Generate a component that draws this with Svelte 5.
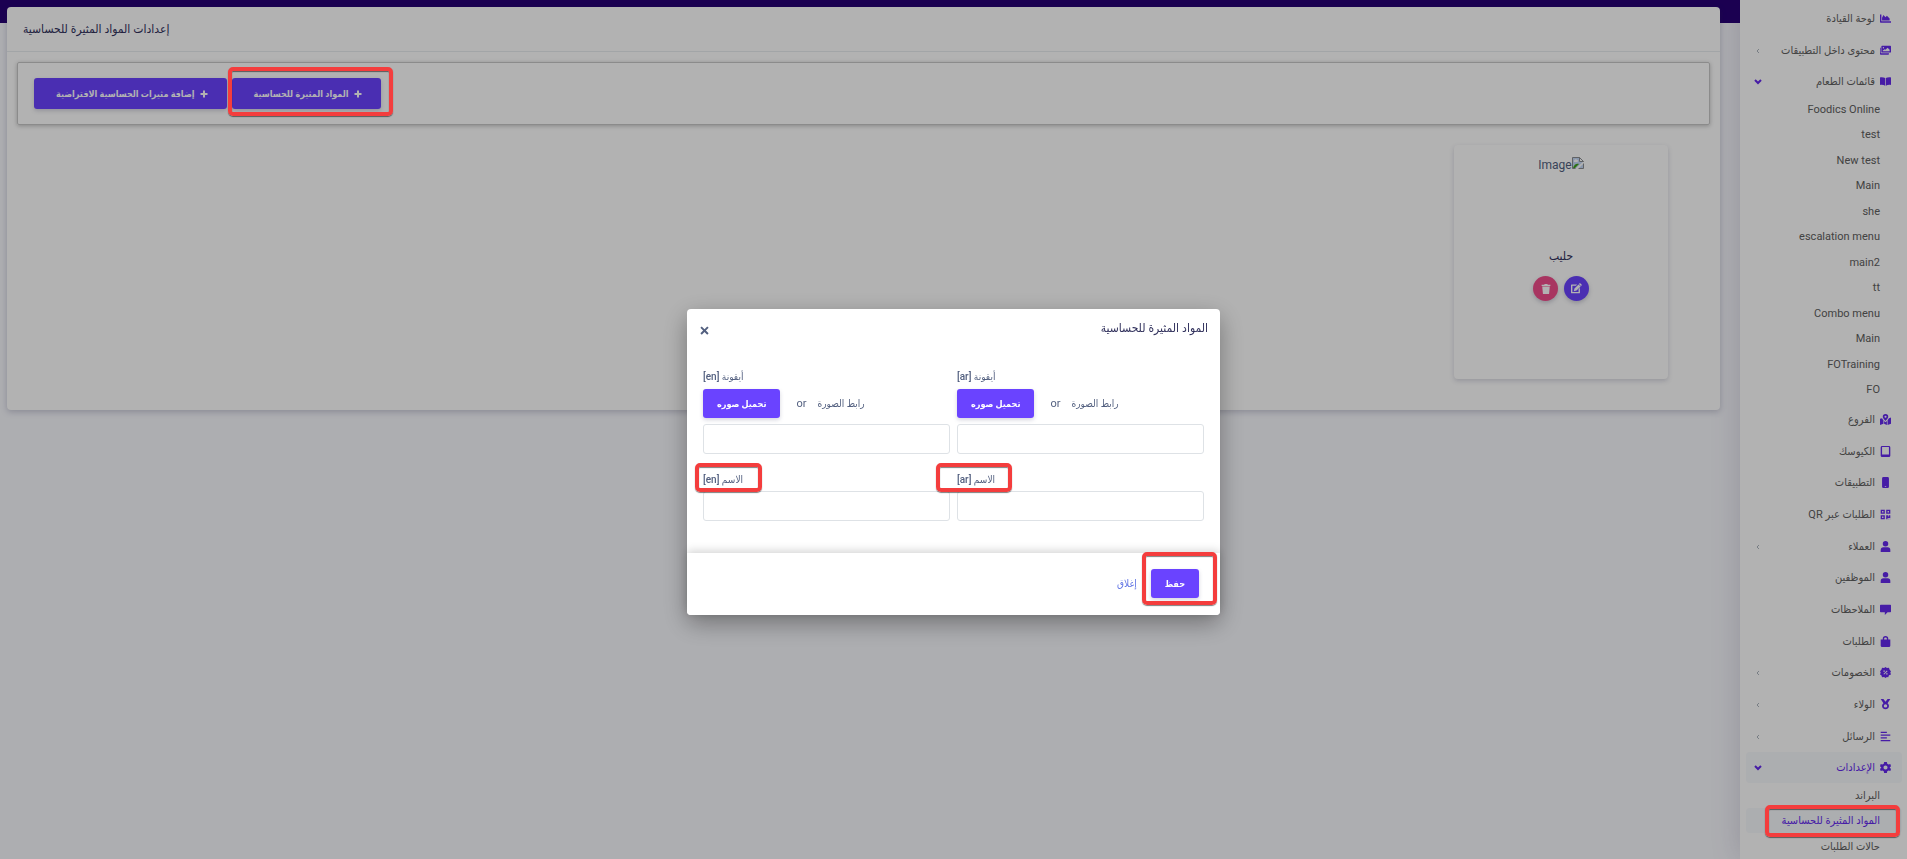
<script lang="ts">
    interface Entry {
        label: string;
        icon: string;
        more?: boolean;
        open?: boolean;
        active?: boolean;
        children?: { label: string; active?: boolean }[];
    }

    const icons: Record<string, string> = {
        chart: "M0 2h2v10h14v2H1a1 1 0 0 1-1-1zM3 11V7l2-4 3 3 2-2 4 4v3z",
        images: "M3 1h12a1 1 0 0 1 1 1v8a1 1 0 0 1-1 1H3a1 1 0 0 1-1-1V2a1 1 0 0 1 1-1zm1 8h10V7l-3-3-3 3-1-1-3 2zM5 3a1 1 0 1 0 0 2 1 1 0 0 0 0-2zM0 4h1v7a1 1 0 0 0 1 1h11v1a1 1 0 0 1-1 1H1a1 1 0 0 1-1-1z",
        book: "M0 2c3-.5 5.500 0 7.500 1v11C5.500 13 3 12.500 0 13zM16 2c-3-.5-5.500 0-7.500 1v11c2-1 4.500-1.500 7.500-1z",
        map: "M8 0a4 4 0 0 1 4 4c0 2-2.500 4.500-4 6-1.500-1.500-4-4-4-6a4 4 0 0 1 4-4zm0 2.500a1.500 1.500 0 1 0 0 3 1.500 1.500 0 0 0 0-3zM0 7l3-1c.5 1 1 2 2 3v5l-5 2zM6 10l2 2 2-2v6l-4-2zM13 6l3-1v9l-5 2V9z",
        tablet: "M3 0h10a2 2 0 0 1 2 2v12a2 2 0 0 1-2 2H3a2 2 0 0 1-2-2V2a2 2 0 0 1 2-2zm0 1.500v11h10v-11z",
        phone: "M5 0h6a2 2 0 0 1 2 2v12a2 2 0 0 1-2 2H5a2 2 0 0 1-2-2V2a2 2 0 0 1 2-2zm2 13v1h2v-1z",
        qr: "M1 1h6v6H1zm2 2v2h2V3zM9 1h6v6H9zm2 2v2h2V3zM1 9h6v6H1zm2 2v2h2v-2zM9 9h3v2h1V9h2v4h-4v2H9zM12 14h1v1h-1zM14 14h1v1h-1z",
        user: "M8 0a4 4 0 1 1 0 8 4 4 0 0 1 0-8zM5 9h6a4 4 0 0 1 4 4v3H1v-3a4 4 0 0 1 4-4z",
        comment: "M1 1h14a1 1 0 0 1 1 1v9a1 1 0 0 1-1 1h-4l-4 4v-4H1a1 1 0 0 1-1-1V2a1 1 0 0 1 1-1z",
        bag: "M4 5V4a4 4 0 0 1 8 0v1h3v9a2 2 0 0 1-2 2H3a2 2 0 0 1-2-2V5zm2 0h4V4a2 2 0 0 0-4 0z",
        badge: "M8 0l2 1.500 3-.5 1 3 2 2-1 2 1 3-3 1-1 3-2-.5L8 16l-2-1.500-3 .5-1-3-2-1 1-3-1-2 2-2 1-3 3 .5zM5 5v2h2V5zM9 9v2h2V9zM10 5l-5 5 1 1 5-5z",
        medal: "M1 0h4l3 4 3-4h4l-4 6a5 5 0 1 1-6 0zm7 7.500a2.500 2.500 0 1 0 0 5 2.500 2.500 0 0 0 0-5z",
        lines: "M1 1h9v2H1zM1 5h14v2H1zM1 9h9v2H1zM1 13h14v2H1z",
        cog: "M6 0h4l.5 2.500L12.500 3.500 15 3l1 3-2 2 2 2-1 3-2.500-.5-2 1L10 16H6l-.5-2.500-2-1L1 13l-1-3 2-2-2-2 1-3 2.500.5 2-1zM8 5a3 3 0 1 0 0 6 3 3 0 0 0 0-6z",
        trash: "M1 1h4l1-1h4l1 1h4v2H1zM2 4h12l-1 11a1 1 0 0 1-1 1H4a1 1 0 0 1-1-1z",
        edit: "M2 2h7L7 4H2v9h9V9l2-2v7a1 1 0 0 1-1 1H1a1 1 0 0 1-1-1V3a1 1 0 0 1 1-1zM13 0l3 3-1.500 1.500-3-3zM11 2l3 3-6 6-4 1 1-4z",
        plus: "M6 1h4v5h5v4h-5v5H6v-5H1V6h5z",
        close: "M2 4l2-2 4 4 4-4 2 2-4 4 4 4-2 2-4-4-4 4-2-2 4-4z",
    };

    const menu: Entry[] = [
        { label: "لوحة القيادة", icon: "chart" },
        { label: "محتوى داخل التطبيقات", icon: "images", more: true },
        {
            label: "قائمات الطعام",
            icon: "book",
            more: true,
            open: true,
            children: [
                { label: "Foodics Online" },
                { label: "test" },
                { label: "New test" },
                { label: "Main" },
                { label: "she" },
                { label: "escalation menu" },
                { label: "main2" },
                { label: "tt" },
                { label: "Combo menu" },
                { label: "Main" },
                { label: "FOTraining" },
                { label: "FO" },
            ],
        },
        { label: "الفروع", icon: "map" },
        { label: "الكيوسك", icon: "tablet" },
        { label: "التطبيقات", icon: "phone" },
        { label: "الطلبات عبر QR", icon: "qr" },
        { label: "العملاء", icon: "user", more: true },
        { label: "الموظفين", icon: "user" },
        { label: "الملاحظات", icon: "comment" },
        { label: "الطلبات", icon: "bag" },
        { label: "الخصومات", icon: "badge", more: true },
        { label: "الولاء", icon: "medal", more: true },
        { label: "الرسائل", icon: "lines", more: true },
        {
            label: "الإعدادات",
            icon: "cog",
            more: true,
            open: true,
            active: true,
            children: [
                { label: "البراند" },
                { label: "المواد المثيرة للحساسية", active: true },
                { label: "حالات الطلبات" },
            ],
        },
    ];

    const langs = ["en", "ar"];
    let urls: Record<string, string> = $state({ en: "", ar: "" });
    let names: Record<string, string> = $state({ en: "", ar: "" });
    let showModal = $state(true);
</script>

{#snippet icon(name: string)}
    <svg class="icon" viewBox="0 0 16 16" aria-hidden="true">
        <path d={icons[name]} fill="currentColor" fill-rule="evenodd" />
    </svg>
{/snippet}

<div class="page" dir="rtl">
    <nav class="sidebar">
        <ul class="menu">
            {#each menu as entry}
                <li>
                    <a href="#top" class="entry" class:active={entry.active}>
                        {@render icon(entry.icon)}
                        <span>{entry.label}</span>
                        {#if entry.more}
                            <svg class="chevron" class:open={entry.open} viewBox="0 0 8 8" aria-hidden="true">
                                <path d={entry.open ? "M1 2l3 3 3-3" : "M5 2L3 4l2 2"} />
                            </svg>
                        {/if}
                    </a>
                    {#if entry.children}
                        <ul class="submenu">
                            {#each entry.children as child}
                                <li>
                                    <a href="#top" class:active={child.active}>{child.label}</a>
                                    {#if child.active}<span class="mark mark-menu"></span>{/if}
                                </li>
                            {/each}
                        </ul>
                    {/if}
                </li>
            {/each}
        </ul>
    </nav>

    <main>
        <section class="card">
            <header><h1>إعدادات المواد المثيرة للحساسية</h1></header>
            <div class="toolbar">
                <div class="marked">
                    <button class="btn large" onclick={() => (showModal = true)}>
                        {@render icon("plus")}المواد المثيرة للحساسية
                    </button>
                    <span class="mark mark-add"></span>
                </div>
                <button class="btn large">{@render icon("plus")}إضافة مثيرات الحساسية الافتراضية</button>
            </div>
            <div class="items">
                <article>
                    <div class="picture">
                        <svg viewBox="0 0 12 12" aria-hidden="true">
                            <path d="M0.500 0.500h7l4 4v7h-11z" fill="#c5d8f6" stroke="#8a8d91" />
                            <path d="M2 4c0-2 3-2 3-1 2 0 1 2 0 2H2z" fill="#fff" />
                            <path d="M1 11c1-4 4-5 6-4L3 11z" fill="#3ea21b" />
                            <path d="M3 12l9-8v2l-6 6z" fill="#fff" />
                            <path d="M7.500 0.500v4h4z" fill="#fff" stroke="#8a8d91" />
                        </svg>
                        <span>Image</span>
                    </div>
                    <h2>حليب</h2>
                    <div class="actions">
                        <button class="round" aria-label="تعديل">{@render icon("edit")}</button>
                        <button class="round danger" aria-label="حذف">{@render icon("trash")}</button>
                    </div>
                </article>
            </div>
        </section>
    </main>
</div>

{#if showModal}
    <div class="backdrop" dir="rtl">
        <div class="modal" role="dialog" aria-modal="true" aria-labelledby="modal-title">
            <header>
                <h2 id="modal-title">المواد المثيرة للحساسية</h2>
                <button class="close" aria-label="إغلاق" onclick={() => (showModal = false)}>
                    {@render icon("close")}
                </button>
            </header>
            <div class="fields" dir="ltr">
                {#each langs as lang}
                    <div class="field">
                        <label for="icon-{lang}" dir="rtl">أيقونة [{lang}]</label>
                        <div class="upload">
                            <button class="btn">تحميل صوره</button>
                            <span class="or">or</span>
                            <span>رابط الصورة</span>
                        </div>
                        <input id="icon-{lang}" type="text" bind:value={urls[lang]} />
                    </div>
                {/each}
                {#each langs as lang}
                    <div class="field">
                        <label for="name-{lang}" dir="rtl">الاسم [{lang}]</label>
                        <input id="name-{lang}" type="text" bind:value={names[lang]} />
                        <span class="mark mark-{lang}"></span>
                    </div>
                {/each}
            </div>
            <footer>
                <div class="marked">
                    <button class="btn">حفظ</button>
                    <span class="mark mark-save"></span>
                </div>
                <button class="link" onclick={() => (showModal = false)}>إغلاق</button>
            </footer>
        </div>
    </div>
{/if}

<style>
    :global(body) {
        background: #f8f9fe;
        overflow: hidden;
    }
    .page,
    .backdrop {
        font-family: Roboto, "DejaVu Sans Condensed", "DejaVu Sans", sans-serif;
        font-size: 11px;
        color: #525f7f;
    }
    .page {
        display: flex;
        height: 100vh;
    }
    h1,
    h2,
    ul {
        margin: 0;
        padding: 0;
        list-style: none;
    }
    button,
    input {
        font: inherit;
    }
    a {
        color: inherit;
        text-decoration: none;
    }
    .icon {
        width: 11px;
        height: 11px;
        flex: none;
    }

    /* sidebar */
    .sidebar {
        flex: 0 0 156px;
        padding: 3px 5px 0 6px;
        overflow: hidden;
        background: #fff;
        color: #606060;
        box-shadow: 0 0 28px rgba(82, 63, 105, 0.2);
    }
    .menu > li {
        margin-bottom: 1px;
    }
    .menu > li:nth-child(3n + 2) {
        margin-bottom: 0;
    }
    .entry {
        display: flex;
        align-items: center;
        gap: 5px;
        height: 31px;
        padding: 0 11px 0 8px;
        border-radius: 4px;
    }
    .entry .icon {
        color: #6529ee;
    }
    .entry.active,
    .submenu .active {
        background: #f6f9fc;
        color: #6529ee;
    }
    .chevron {
        width: 8px;
        height: 8px;
        margin-inline-start: auto;
        fill: none;
        stroke: #adb5bd;
        stroke-width: 1;
    }
    .chevron.open {
        stroke: #6529ee;
        stroke-width: 2;
    }
    .submenu li {
        position: relative;
    }
    .submenu li:nth-child(even) {
        padding-bottom: 1px;
    }
    .submenu a {
        display: block;
        padding-inline-start: 22px;
        line-height: 25px;
        border-radius: 4px;
    }

    /* main area */
    main {
        flex: 1;
        min-width: 0;
        padding: 7px 20px 0 7px;
        background: linear-gradient(#270075, #270075) no-repeat top / 100% 23px;
    }
    .card {
        padding-bottom: 31px;
        border-radius: 4px;
        background: #fff;
        box-shadow: 0 2px 6px rgba(50, 50, 93, 0.25);
    }
    .card > header {
        display: flex;
        justify-content: flex-end;
        padding: 0 16px;
        border-bottom: 1px solid #e9ecef;
    }
    h1,
    h2 {
        font-size: 12px;
        font-weight: 500;
        line-height: 22px;
        color: #32325d;
    }
    h1 {
        line-height: 44px;
    }
    .toolbar {
        display: flex;
        align-items: center;
        justify-content: flex-end;
        gap: 5px;
        margin: 10px 10px 0;
        padding: 15px 16px;
        border: 1px solid #c8c8c8;
        border-radius: 2px;
        box-shadow: 0 1px 4px rgba(0, 0, 0, 0.25);
    }
    .btn {
        display: flex;
        align-items: center;
        justify-content: center;
        gap: 5px;
        height: 29px;
        padding: 0 14px;
        border: 0;
        border-radius: 3px;
        background: #6a43ff;
        color: #fff;
        font-size: 9px;
        font-weight: 700;
        white-space: nowrap;
        box-shadow: 0 2px 4px rgba(50, 50, 93, 0.2);
    }
    .btn.large {
        height: 31px;
        padding: 0 19px 0 22px;
    }
    .btn .icon {
        width: 8px;
        height: 8px;
    }
    .items {
        padding: 20px 52px 0;
    }
    article {
        display: flex;
        flex-direction: column;
        align-items: center;
        width: 214px;
        padding: 12px 0 78px;
        box-sizing: border-box;
        border-radius: 4px;
        box-shadow: 0 2px 5px rgba(50, 50, 93, 0.2);
    }
    .picture {
        display: flex;
        height: 88px;
        line-height: 16px;
        font-size: 12px;
    }
    .picture svg {
        width: 12px;
        height: 12px;
    }
    .actions {
        display: flex;
        gap: 6px;
        margin-top: 9px;
    }
    .round {
        display: grid;
        place-items: center;
        width: 25px;
        height: 25px;
        padding: 0;
        border: 0;
        border-radius: 50%;
        background: #6a43ff;
        color: #fff;
        box-shadow: 0 2px 4px rgba(50, 50, 93, 0.25);
    }
    .round.danger {
        background: #f14d8c;
    }
    .danger .icon {
        width: 10px;
        height: 10px;
    }

    /* modal */
    .backdrop {
        position: fixed;
        inset: 0;
        z-index: 5;
        display: flex;
        align-items: flex-start;
        justify-content: center;
        padding-top: 36vh;
        background: rgba(0, 0, 0, 0.3);
    }
    .modal {
        width: 533px;
        border-radius: 4px;
        background: #fff;
        box-shadow: 0 8px 24px rgba(0, 0, 0, 0.35);
    }
    .modal header {
        display: flex;
        align-items: flex-start;
        justify-content: space-between;
        padding: 8px 12px 22px;
    }
    .close {
        display: flex;
        padding: 8px 0;
        border: 0;
        background: none;
        color: #525f7f;
    }
    .fields {
        display: grid;
        grid-template-columns: 1fr 1fr;
        gap: 15px 7px;
        padding: 0 16px 32px;
    }
    .field {
        position: relative;
    }
    label {
        display: block;
        line-height: 22px;
        font-size: 10px;
        font-weight: 500;
        text-align: left;
    }
    .upload {
        display: flex;
        align-items: center;
        gap: 11px;
        margin: 1px 0 6px;
        font-size: 10px;
    }
    .upload .btn {
        margin-right: 5px;
    }
    .or {
        font-size: 11px;
    }
    input {
        display: block;
        width: 100%;
        height: 30px;
        box-sizing: border-box;
        padding: 0 8px;
        border: 1px solid #dee2e6;
        border-radius: 3px;
        background: #fff;
    }
    .modal footer {
        display: flex;
        align-items: center;
        gap: 14px;
        padding: 16px 21px 17px;
        border-radius: 0 0 4px 4px;
        background: #fff;
        box-shadow: 0 -2px 10px rgba(0, 0, 0, 0.18);
    }
    .link {
        padding: 0;
        border: 0;
        background: none;
        color: #5e72e4;
        font-size: 10px;
        font-weight: 500;
    }

    /* red highlight frames */
    .marked {
        position: relative;
    }
    .mark {
        position: absolute;
        z-index: 10;
        box-sizing: border-box;
        border: 4px solid #f43d3d;
        border-radius: 5px;
        box-shadow:
            0 1px 1px rgba(0, 0, 0, 0.5),
            inset 0 1px 1px rgba(0, 0, 0, 0.5);
        pointer-events: none;
    }
    .mark-menu {
        inset: -3px 2px -3px 19px;
    }
    .mark-add {
        inset: -11px -12px -7px -4px;
    }
    .mark-en {
        inset: -6px 188px 29px -8px;
    }
    .mark-ar {
        inset: -6px 192px 29px -21px;
    }
    .mark-save {
        inset: -17px -18px -7px -9px;
    }
</style>
